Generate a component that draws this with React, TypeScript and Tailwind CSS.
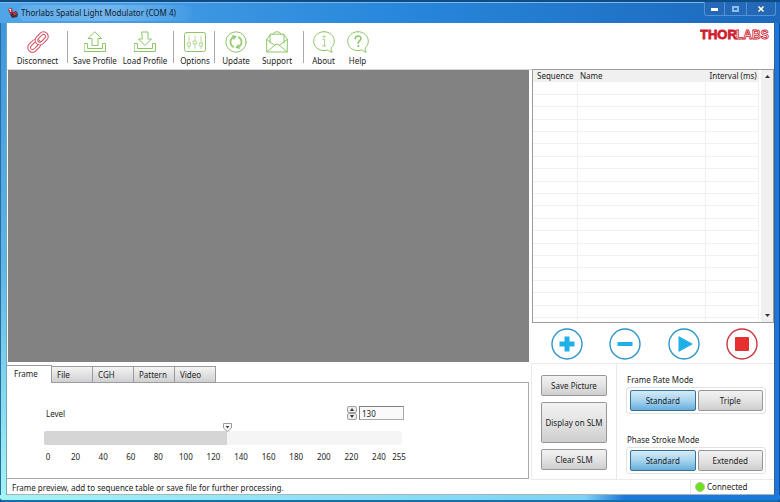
import React, { useState } from 'react';

const GREEN = '#8cc665';
const RED = '#d4485a';

const TABS = ['Frame', 'File', 'CGH', 'Pattern', 'Video'];
const TICKS = [0, 20, 40, 60, 80, 100, 120, 140, 160, 180, 200, 220, 240];
const ROWS = Array.from({ length: 19 }, (_, i) => i);

const Icon: React.FC<{ color?: string; children: React.ReactNode }> = ({ color = GREEN, children }) => (
  <svg viewBox="0 0 22 22" className="w-[22px] h-[22px]" fill="none" stroke={color} strokeWidth="1" strokeLinejoin="round" strokeLinecap="round">
    {children}
  </svg>
);

const DisconnectIcon = () => (
  <Icon color={RED}>
    <g transform="rotate(-45 11 11)">
      <rect x="-0.2" y="7.6" width="12" height="6.8" rx="3.4" strokeWidth="3.6" />
      <rect x="-0.2" y="7.6" width="12" height="6.8" rx="3.4" stroke="#fff" strokeWidth="1.7" />
      <path d="M10.2 11 V11 A3.4 3.4 0 0 1 13.6 7.6 H18.8 A3.4 3.4 0 0 1 18.8 14.4 H13.6 A3.4 3.4 0 0 1 10.2 11" strokeWidth="3.6" />
      <path d="M10.2 11 V11 A3.4 3.4 0 0 1 13.6 7.6 H18.8 A3.4 3.4 0 0 1 18.8 14.4 H13.6 A3.4 3.4 0 0 1 10.2 11" stroke="#fff" strokeWidth="1.7" />
    </g>
  </Icon>
);

const Tray = () => <path d="M0.5 12.5 H3.5 V17.5 H18.5 V12.5 H21.5 V20.5 H0.5 Z" />;

const SaveIcon = () => (
  <Icon>
    <Tray />
    <path d="M11 1 L17.5 7.5 H14 V14.5 H8 V7.5 H4.5 Z" />
  </Icon>
);

const LoadIcon = () => (
  <Icon>
    <Tray />
    <path d="M8 1 H14 V8 H17.5 L11 14.5 L4.5 8 H8 Z" />
  </Icon>
);

const OptionsIcon = () => (
  <Icon>
    <rect x="0.5" y="1.5" width="21" height="19" rx="2" />
    <g strokeOpacity="0.6">
      <path d="M5 5 V12 M5 15 V17.5 M11 5 V10 M11 13 V17.5 M17 5 V12 M17 15 V17.5" />
      <rect x="3.5" y="12" width="3" height="3" />
      <rect x="9.5" y="10" width="3" height="3" />
      <rect x="15.5" y="12" width="3" height="3" />
    </g>
  </Icon>
);

const UpdateIcon = () => (
  <Icon>
    <circle cx="11" cy="11" r="10.2" />
    <path d="M9 16.2 A5.6 5.6 0 0 1 8 6.3 M13 5.8 A5.6 5.6 0 0 1 14 15.7" strokeWidth="1.8" strokeOpacity="0.85" strokeLinecap="butt" />
    <path d="M7.6 4.2 L11.4 5.6 L8.8 8.6 Z M14.4 17.8 L10.6 16.4 L13.2 13.4 Z" fill={GREEN} strokeWidth="0.4" />
  </Icon>
);

const SupportIcon = () => (
  <Icon>
    <path d="M4 4 L0.7 8.2 V21 H21.3 V8.2 L18 4" />
    <path d="M4 12 V3.2 H18 V12" />
    <path d="M7 3 Q8 0.7 11 0.7 Q14 0.7 15 3" />
    <path d="M0.8 8.4 L9 14.6 M21.2 8.4 L13 14.6 M1 20.8 L9.5 13.6 Q11 12.6 12.5 13.6 L21 20.8" />
  </Icon>
);

const Bubble = () => (
  <path d="M11 0.7 C5.2 0.7 0.7 4.8 0.7 10.2 C0.7 15.6 5.2 19.6 11 19.6 C12.4 19.6 13.8 19.4 15 18.8 C16.2 20.2 17.6 21 19.4 21.2 C18.2 19.8 18 18.4 18.2 16.8 C20.2 15.1 21.3 12.8 21.3 10.2 C21.3 4.8 16.8 0.7 11 0.7 Z" />
);

const AboutIcon = () => (
  <Icon>
    <Bubble />
    <circle cx="11" cy="5.6" r="0.9" strokeWidth="0.7" />
    <path d="M9.8 8.3 H11.6 V14.5 M9.6 14.9 H12.8" strokeOpacity="0.8" />
  </Icon>
);

const HelpIcon = () => (
  <Icon>
    <Bubble />
    <path d="M8.2 7.8 C8.2 4 14 4 14 7.5 C14 9.6 11.2 9.8 11.2 12.2" strokeWidth="1.5" />
    <circle cx="11.2" cy="15" r="0.6" fill={GREEN} />
  </Icon>
);

const ToolButton: React.FC<{ label: string; width: string; children: React.ReactNode }> = ({ label, width, children }) => (
  <button className={`${width} flex flex-col items-center gap-[2px] whitespace-nowrap`}>
    {children}
    <span className="leading-3">{label}</span>
  </button>
);

const Divider = () => <div className="w-px h-8 bg-[#a9a9a9]" />;

const RoundButton: React.FC<{ label: string; color: string; children: React.ReactNode }> = ({ label, color, children }) => (
  <button aria-label={label} className="w-8 h-8">
    <svg viewBox="0 0 32 32" className="w-8 h-8">
      <circle cx="16" cy="16" r="15" fill="#fff" stroke={color} strokeWidth="1.4" />
      {children}
    </svg>
  </button>
);

const GRAY_BUTTON =
  'rounded-[2px] border border-[#979797] bg-linear-to-b from-[#f2f2f2] via-[#e3e3e3] to-[#cecece] whitespace-nowrap';
const BLUE_BUTTON =
  'rounded-[2px] border border-[#3c6f94] bg-linear-to-b from-[#d3ebf8] via-[#a5d4ef] to-[#66afdb] whitespace-nowrap';

const ModeGroup: React.FC<{ title: string; options: string[] }> = ({ title, options }) => {
  const [selected, setSelected] = useState(options[0]);

  return (
    <div role="group" aria-label={title}>
      <div className="leading-3 pl-px">{title}</div>
      <div className="mt-px flex gap-[2px] p-[2px] pl-[3px] rounded-[3px] border border-[#e2e2e2]">
        {options.map((option) => (
          <button
            key={option}
            aria-pressed={option === selected}
            onClick={() => setSelected(option)}
            className={`flex-1 h-[21px] ${option === selected ? BLUE_BUTTON : GRAY_BUTTON}`}
          >
            {option}
          </button>
        ))}
      </div>
    </div>
  );
};

const TitleBar = () => (
  <header className="h-[23px] flex items-start border-t-2 border-[#0d4c86] bg-linear-to-r from-[#4fa5e8] via-[#2888dc] to-[#1c68bc]">
    <div className="flex-1 h-full pb-px flex items-center border-t border-[#7cb9e6]">
      <svg viewBox="0 0 10 10" className="ml-2 w-[10px] h-[10px]">
        <path d="M0 1 L4 0 L5 5 L2 6 Z" fill="#c3202c" />
        <path d="M2 6 L8 3 L10 6 L9 9 L4 10 Z" fill="#4a2a30" />
        <path d="M5 5 L8 4 L9 6 L6 8 Z" fill="#b83a40" />
        <path d="M1 1.5 H3.4 M2.2 1.5 L2.8 4" stroke="#fff" strokeWidth="0.8" />
      </svg>
      <h1 className="pl-[3px] pr-4 text-[#0c1c30] leading-4 rounded-full bg-linear-to-r from-[#7fbcee]/40 via-[#7fbcee]/80 to-[#7fbcee]/10">
        Thorlabs Spatial Light Modulator (COM 4)
      </h1>
    </div>
    <div className="mr-1 flex h-[14px] rounded-b-[3px] border border-t-0 border-[#4f94d8] divide-x divide-[#4f94d8] bg-[#2468b8]">
      <button aria-label="Minimize" className="w-5 flex justify-center items-center">
        <span className="w-[7px] h-[3px] mt-px bg-white" />
      </button>
      <button aria-label="Maximize" className="w-[22px] flex justify-center items-center">
        <span className="w-[7px] h-[6px] border-2 border-[#8dbbea]" />
      </button>
      <button aria-label="Close" className="w-7 flex justify-center items-center">
        <svg viewBox="0 0 8 8" className="w-2 h-2">
          <path d="M1.5 1.5 L6.5 6.5 M6.5 1.5 L1.5 6.5" stroke="#34506e" strokeWidth="2.6" />
          <path d="M1.5 1.5 L6.5 6.5 M6.5 1.5 L1.5 6.5" stroke="#fff" strokeWidth="1.7" />
        </svg>
      </button>
    </div>
  </header>
);

const Toolbar = () => (
  <div className="flex items-start h-[46px] pt-2 pl-2 pr-1">
    <ToolButton label="Disconnect" width="w-[45px]"><DisconnectIcon /></ToolButton>
    <div className="w-[7px]" />
    <Divider />
    <div className="w-[2px]" />
    <ToolButton label="Save Profile" width="w-[50px]"><SaveIcon /></ToolButton>
    <ToolButton label="Load Profile" width="w-[50px]"><LoadIcon /></ToolButton>
    <div className="w-[3px]" />
    <Divider />
    <div className="w-[2px]" />
    <ToolButton label="Options" width="w-[38px]"><OptionsIcon /></ToolButton>
    <Divider />
    <ToolButton label="Update" width="w-[42px]"><UpdateIcon /></ToolButton>
    <ToolButton label="Support" width="w-10"><SupportIcon /></ToolButton>
    <div className="w-[6px]" />
    <Divider />
    <div className="w-[2px]" />
    <ToolButton label="About" width="w-[35px]"><AboutIcon /></ToolButton>
    <ToolButton label="Help" width="w-[33px]"><HelpIcon /></ToolButton>
    <svg viewBox="0 0 70 14" className="ml-auto -mt-1 w-[70px] h-[14px]" fontFamily="Liberation Sans, sans-serif" fontWeight="bold" fontSize="13" stroke="#cf2030">
      <text x="0" y="12" fill="#cf2030" strokeWidth="0.8">THOR</text>
      <text x="36" y="12" fill="#fff" strokeWidth="0.8" fontSize="12">LABS</text>
    </svg>
  </div>
);

const SequenceTable = () => (
  <div className="flex-1 flex border border-[#9a9a9a]">
    <table className="flex-1 table-fixed border-collapse text-left">
      <thead>
        <tr className="h-3 bg-[#f0f0f0] leading-3">
          <th className="w-11 pl-1 font-normal whitespace-nowrap">Sequence</th>
          <th className="pl-[3px] font-normal">Name</th>
          <th className="w-[53px] pl-1 font-normal whitespace-nowrap">Interval (ms)</th>
        </tr>
      </thead>
      <tbody>
        {ROWS.map((row) => (
          <tr key={row} className="h-[11px] border-b border-[#f0f0f0]">
            <td className="border-r border-[#f0f0f0]" />
            <td className="border-r border-[#f0f0f0]" />
            <td className="border-r border-[#f0f0f0]" />
          </tr>
        ))}
        <tr className="h-1">
          <td className="border-r border-[#f0f0f0]" />
          <td className="border-r border-[#f0f0f0]" />
          <td className="border-r border-[#f0f0f0]" />
        </tr>
      </tbody>
    </table>
    <div className="w-[14px] pl-[2px] flex flex-col">
      <div className="flex-1 flex flex-col justify-between items-center py-[5px] bg-[#f0f0f0]">
        <svg viewBox="0 0 5 3" className="w-[5px] h-[3px]"><path d="M0 3 L2.5 0 L5 3 Z" fill="#333" /></svg>
        <svg viewBox="0 0 5 3" className="w-[5px] h-[3px]"><path d="M0 0 L2.5 3 L5 0 Z" fill="#333" /></svg>
      </div>
    </div>
  </div>
);

const LevelPanel = () => {
  const [level, setLevel] = useState(130);
  const clamp = (value: number) => setLevel(Math.max(0, Math.min(255, value || 0)));

  return (
    <div className="flex-1 pl-[37px] pt-[23px] border-r border-b border-[#a8a8a8]">
      <div className="w-[360px] flex items-center">
        <label htmlFor="level" className="flex-1 pt-[2px] pl-[2px]">Level</label>
        <div className="w-[10px] mr-[2px] flex flex-col">
          <button aria-label="Increase" onClick={() => clamp(level + 1)} className="h-[7px] flex justify-center items-center rounded-[2px] border border-[#a0a0a0] bg-[#eee]">
            <svg viewBox="0 0 4 3" className="w-1 h-[3px]"><path d="M0 3 L2 0 L4 3 Z" fill="#333" /></svg>
          </button>
          <button aria-label="Decrease" onClick={() => clamp(level - 1)} className="h-[7px] flex justify-center items-center rounded-[2px] border border-[#a0a0a0] bg-[#eee]">
            <svg viewBox="0 0 4 3" className="w-1 h-[3px]"><path d="M0 0 L2 3 L4 0 Z" fill="#333" /></svg>
          </button>
        </div>
        <input
          id="level"
          value={level}
          onChange={(e) => clamp(parseInt(e.target.value, 10))}
          className="w-[45px] h-[14px] pl-[2px] bg-[#fafafa] border border-[#a8a8a8] border-t-[#808080] border-l-[#808080]"
        />
      </div>
      <div className="relative mt-[11px] w-[358px] h-[14px] rounded-[2px] bg-[#f5f5f5]">
        <div className="h-full rounded-l-[2px] bg-[#d5d5d5]" style={{ width: `${(level / 255) * 100}%` }} />
        <svg viewBox="0 0 9 9" className="absolute -top-2 -ml-1 w-[9px] h-[9px]" style={{ left: `${(level / 255) * 100}%` }}>
          <path d="M0.5 0.5 H8.5 V5 L4.5 8.5 L0.5 5 Z" fill="#fafafa" stroke="#999" />
          <path d="M2.5 3 H6.5 L4.5 5.5 Z" fill="#444" />
        </svg>
        <input
          type="range"
          aria-label="Level"
          min={0}
          max={255}
          value={level}
          onChange={(e) => clamp(Number(e.target.value))}
          className="absolute inset-0 w-full opacity-0"
        />
      </div>
      <div className="-ml-[6px] mt-[6px] w-[371px] flex leading-3 text-center">
        <div className="flex-1 flex justify-between">
          {TICKS.map((tick) => (
            <span key={tick} className="w-5">{tick}</span>
          ))}
        </div>
        <span className="w-5">255</span>
      </div>
    </div>
  );
};

const TabArea = () => {
  const [active, setActive] = useState('Frame');

  return (
    <section className="h-[114px] mr-[2px] mb-px flex flex-col">
      <div role="tablist" className="h-[18px] flex items-end">
        {TABS.map((tab) => (
          <button
            key={tab}
            role="tab"
            aria-selected={tab === active}
            onClick={() => setActive(tab)}
            className={
              tab === active
                ? 'w-[45px] h-[18px] pl-[7px] pb-[2px] text-left border-t border-r border-[#9c9c9c] bg-white'
                : 'w-[41px] h-[17px] pl-[5px] text-left border border-l-0 border-[#9c9c9c] bg-linear-to-b from-[#f4f4f4] to-[#d0d0d3]'
            }
          >
            {tab}
          </button>
        ))}
        <div className="flex-1 h-[17px] border-b border-[#a8a8a8]" />
      </div>
      <LevelPanel />
    </section>
  );
};

export default function App() {
  return (
    <div className="min-h-screen flex flex-col bg-[#0d4c86] font-['Noto_Sans',sans-serif] text-[8px] text-[#1c1c1c]">
      <TitleBar />
      <div className="flex-1 flex">
        <div className="w-[7px] bg-linear-to-b from-[#3f96de] via-[#5cb4e8] to-[#a4f4f4] border-l border-r border-l-[#2a6c9c] border-r-[#6fa8bd]" />
        <div className="flex-1 min-w-0 flex flex-col bg-white">
          <Toolbar />
          <main className="flex-1 flex border-t border-[#d4d4d4]">
            <div className="flex-1 min-w-0 flex flex-col">
              <div className="flex-1 ml-px mr-[2px] mb-[3px] bg-[#828282]" />
              <TabArea />
            </div>
            <aside className="w-[243px] flex flex-col">
              <div className="flex-1 flex flex-col -mt-px pl-px">
                <SequenceTable />
              </div>
              <div className="flex justify-between pt-[5px] pb-[3px] pl-5 pr-4 border-b border-[#eaeaea]">
                <RoundButton label="Add" color="#2e95c9">
                  <path d="M13.5 8.5 H18.5 V13.5 H23.5 V18.5 H18.5 V23.5 H13.5 V18.5 H8.5 V13.5 H13.5 Z" fill="#1eb0e6" />
                </RoundButton>
                <RoundButton label="Remove" color="#2e95c9">
                  <rect x="8.5" y="14" width="15" height="4" fill="#1eb0e6" />
                </RoundButton>
                <RoundButton label="Play" color="#2e95c9">
                  <path d="M10.5 8 L25 16 L10.5 24 Z" fill="#1eb0e6" />
                </RoundButton>
                <RoundButton label="Stop" color="#c93640">
                  <rect x="9" y="9" width="14" height="14" rx="1" fill="#e5302f" />
                </RoundButton>
              </div>
              <div className="h-[116px] flex border-l border-b border-[#eaeaea]">
                <div className="w-[85px] flex flex-col gap-[6px] pt-[11px] px-[9px] border-r border-[#eaeaea]">
                  <button className={`h-[21px] ${GRAY_BUTTON}`}>Save Picture</button>
                  <button className={`h-[41px] ${GRAY_BUTTON}`}>Display on SLM</button>
                  <button className={`h-[21px] ${GRAY_BUTTON}`}>Clear SLM</button>
                </div>
                <div className="flex-1 flex flex-col gap-5 pt-[10px] pl-[9px] pr-2">
                  <ModeGroup title="Frame Rate Mode" options={['Standard', 'Triple']} />
                  <ModeGroup title="Phase Stroke Mode" options={['Standard', 'Extended']} />
                </div>
              </div>
            </aside>
          </main>
          <footer className="h-[15px] flex border-b border-[#a9b4b8]">
            <p className="flex-1 pl-[5px] pt-px leading-[14px]">Frame preview, add to sequence table or save file for further processing.</p>
            <div className="w-[84px] pl-1 flex items-center gap-[2px] border-l border-[#eaeaea]">
              <span className="w-[10px] h-[10px] rounded-full border border-[#a8c8a0] bg-[#6ee01c]" />
              <span>Connected</span>
            </div>
          </footer>
        </div>
        <div className="w-[6px] bg-[#1b78de] border-l border-r border-l-[#3f5f7c] border-r-[#0e4f9c]" />
      </div>
      <div className="h-[7px] rounded-b-[4px] border-b-2 border-[#1470a8] bg-linear-to-r from-[#a4f4f4] via-[#7fd0f4] via-75% to-[#1b78de] to-80%" />
    </div>
  );
}
